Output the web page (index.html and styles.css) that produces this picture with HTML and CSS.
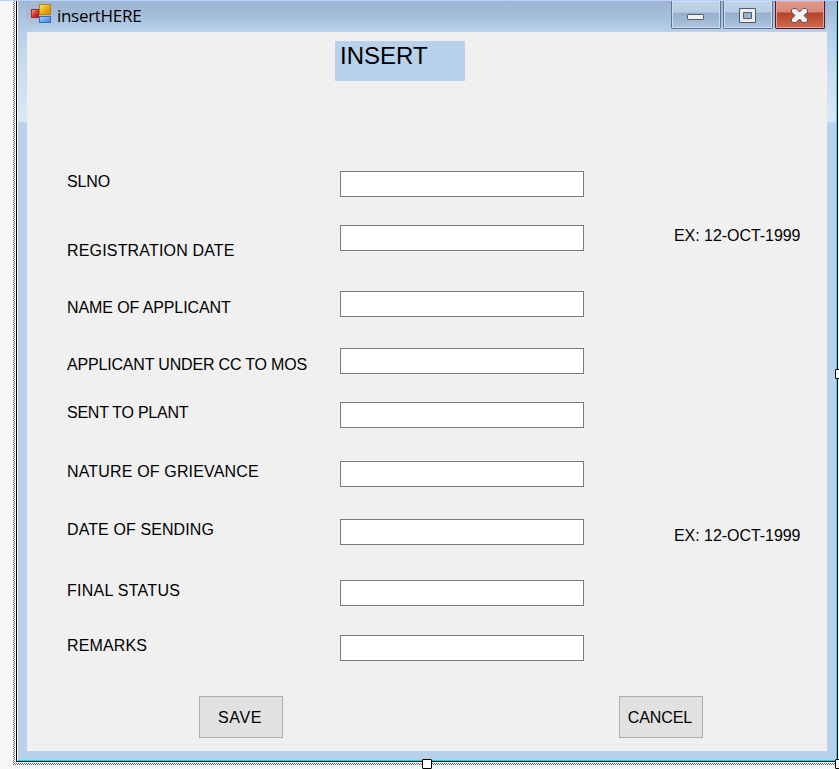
FILE: index.html
```html
<!DOCTYPE html>
<html lang="en">
<head>
<meta charset="utf-8">
<title>insertHERE</title>
<link rel="stylesheet" href="styles.css">
</head>
<body>
<div class="designer">
  <div class="selection">
    <div class="window">
      <header class="titlebar">
        <svg class="app-icon" width="22" height="22" viewBox="0 0 22 22">
          <defs>
            <linearGradient id="gold" x2="1" y2="1"><stop stop-color="#ffe77a"/><stop offset=".55" stop-color="#e8a90c"/><stop offset="1" stop-color="#c88a00"/></linearGradient>
            <linearGradient id="red" x2="1" y2="1"><stop stop-color="#f5a79b"/><stop offset=".6" stop-color="#cf3127"/><stop offset="1" stop-color="#b01a14"/></linearGradient>
            <linearGradient id="blue" x2="1" y2="1"><stop stop-color="#a9ccff"/><stop offset="1" stop-color="#3f7ce0"/></linearGradient>
          </defs>
          <path d="M.5 5V.5H9M.5 15V20.500H9" fill="none" stroke="#b9bdc4"/>
          <rect x="9.500" y="1.500" width="11" height="10" fill="url(#gold)" stroke="#b98510"/>
          <rect x="1.500" y="6.500" width="7" height="8" fill="url(#red)" stroke="#a92820"/>
          <rect x="9.500" y="13.500" width="11" height="6" fill="url(#blue)" stroke="#3e68b5"/>
        </svg>
        <h1 class="caption">insertHERE</h1>
        <div class="controls">
          <button class="control" aria-label="Minimize"><svg width="48" height="26" viewBox="0 0 48 26"><rect x="15.500" y="12.500" width="16" height="5" rx=".7" fill="#f0f0f0" stroke="#555c69"/></svg></button>
          <button class="control" aria-label="Maximize"><svg width="48" height="26" viewBox="0 0 48 26"><path d="M15.500 6.500h16v14h-16zM19.500 10.500v6h8v-6z" fill="#ededed" fill-rule="evenodd" stroke="#4f5b6c"/></svg></button>
          <button class="control close" aria-label="Close"><svg width="48" height="26" viewBox="0 0 48 26"><path d="M17 6.500h3l3.500 3.500L27 6.500h3l1.500 1.500v2L28 13.500l3.500 3.500v2L30 20.500h-3L23.500 17 20 20.500h-3L15.500 19v-2l3.500-3.500-3.500-3.500V8z" fill="#f3f1f1" stroke="#5b4d58"/></svg></button>
        </div>
      </header>
      <main class="client">
        <h2 class="heading">INSERT</h2>
        <form class="form">
          <div class="row r1"><label for="f1">SLNO</label><input id="f1"></div>
          <div class="row r2"><label for="f2">REGISTRATION DATE</label><input id="f2"><span class="hint">EX: 12-OCT-1999</span></div>
          <div class="row r3"><label for="f3">NAME OF APPLICANT</label><input id="f3"></div>
          <div class="row r4"><label for="f4">APPLICANT UNDER CC TO MOS</label><input id="f4"></div>
          <div class="row r5"><label for="f5">SENT TO PLANT</label><input id="f5"></div>
          <div class="row r6"><label for="f6">NATURE OF GRIEVANCE</label><input id="f6"></div>
          <div class="row r7"><label for="f7">DATE OF SENDING</label><input id="f7"><span class="hint">EX: 12-OCT-1999</span></div>
          <div class="row r8"><label for="f8">FINAL STATUS</label><input id="f8"></div>
          <div class="row r9"><label for="f9">REMARKS</label><input id="f9"></div>
          <div class="actions"><button class="save" type="button">SAVE</button><button type="button">CANCEL</button></div>
        </form>
      </main>
    </div>
  </div>
  <i class="handle bottom"></i><i class="handle right"></i><i class="handle corner"></i>
</div>
</body>
</html>
```
FILE: styles.css
```css
* { box-sizing: border-box; }
body { margin: 0; background: #f6f6f6; font-family: "Liberation Sans", Arial, sans-serif; overflow: hidden; }
.designer { position: relative; width: 839px; height: 769px; overflow: hidden; border-top: 1px solid #bfd0ff; }
.selection {
  width: 828px; height: 764px; margin-left: 13px; padding: 0 3px 3px;
  background: repeating-conic-gradient(#666 0 25%, #fff 0 50%) 0 0 / 2px 2px;
}
.window {
  width: 822px; height: 761px; padding: 0 9px 9px;
  border: 1px solid #000; border-top: 0;
  background: linear-gradient(#a0b8d4 0, #b2cae5 25px, #c5d9ee 55px, #dbe8f6 120px, #b9d1ea 122px);
  box-shadow: inset 1px 0 #fff, inset -1px -1px #19d7ee;
  padding-left: 10px;
  outline: 1px solid #f6f6f6;
}
.titlebar { display: flex; height: 31px; margin-right: -1px; background: linear-gradient(#9fb7d3, #a3bbd7 40%, #b9d1ea); }
.app-icon { margin: 2px 0 0 3px; }
.caption { margin: 4px 0 0 5px; font: 17px/22px "Open Sans", "Noto Sans", sans-serif; letter-spacing: -.3px; flex: 1; color: #000; }
.controls { display: flex; gap: 2px; margin-right: 4px; }
.control {
  width: 50px; height: 28px; padding: 0; border: 1px solid #62758f; border-top: 0; border-radius: 0 0 2px 2px;
  background: linear-gradient(#bfd3e8, #b9cee5 11px, #96b0cd 12px, #abc4df 27px);
  box-shadow: inset 0 0 0 1px #cfdeed;
}
.control svg { display: block; }
.close { border-color: #521522; background: linear-gradient(#e19a8c, #d98977 11px, #b6412b 12px, #cf6c50 27px); box-shadow: inset 0 0 0 1px #e5a699; }
.client { width: 800px; height: 719px; background: #f0f0f0; padding-top: 9px; }
.heading { width: 130px; height: 40px; margin: 0 0 90px 308px; padding: 1px 0 0 5px; background: #b9d1ea; font-size: 24px; line-height: 28px; font-weight: 400; }
.row { display: grid; grid-template-columns: 273px 334px 1fr; align-items: start; margin-left: 40px; height: 54px; font-size: 16px; line-height: 18px; letter-spacing: -.1px; }
.row label { padding-top: 2px; }
.row input { width: 244px; height: 26px; border: 1px solid #7a7a7a; background: #fff; padding: 2px 4px; font: inherit; }
.hint { padding-top: 2px; letter-spacing: -.05px; }
.r2 { height: 66px; }
.r2 label { padding-top: 17px; letter-spacing: .17px; }
.r3, .r4 { height: 57px; }
.r3 label, .r4 label { padding-top: 8px; }
.r4 { height: 54px; }
.r4 label { letter-spacing: -.18px; }
.r5 { height: 59px; }
.r5 label { letter-spacing: -.25px; }
.r6 { height: 58px; }
.r6 label { letter-spacing: .16px; }
.r7 { height: 61px; }
.r7 label { letter-spacing: .1px; }
.r7 .hint { padding-top: 8px; }
.r8 { height: 55px; }
.r8 label { letter-spacing: .27px; }
.r9 { height: 61px; }
.r9 label { letter-spacing: .15px; }
.actions { display: flex; gap: 336px; margin-left: 172px; }
.actions button { width: 84px; height: 42px; padding: 2px 2px 0 0; border: 1px solid #adadad; background: #e1e1e1; color: #000; font: 16px/18px "Liberation Sans", Arial, sans-serif; letter-spacing: -.1px; }
.actions .save { letter-spacing: .6px; }
.handle { position: absolute; width: 10px; height: 10px; border: 1px solid #000; border-radius: 1px; background: #fff; }
.bottom { left: 422px; top: 758px; }
.right { left: 835px; top: 368px; }
.corner { left: 835px; top: 758px; }
```
